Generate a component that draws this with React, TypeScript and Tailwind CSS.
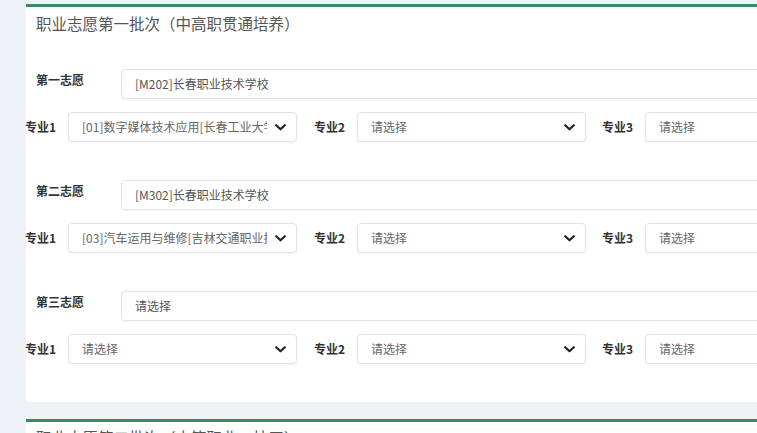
const font = { fontFamily: '"Noto Sans CJK SC", "Noto Sans", sans-serif' };

function Chevron() {
  return (
    <svg width="11" height="7" viewBox="0 0 11 7" className="shrink-0">
      <path d="M1.2 1.2 L5.5 5.3 L9.8 1.2" fill="none" stroke="#222" strokeWidth="2.2" strokeLinecap="round" strokeLinejoin="round" />
    </svg>
  );
}

function SelectBox({ value, width, chevron = true }: { value: string; width?: string; chevron?: boolean }) {
  return (
    <div
      className={`${width ?? 'flex-1'} h-[30px] flex items-center gap-2 pl-[13px] pr-[10px] bg-white border border-[#e1e3e8] rounded-[4px] shadow-[0_1px_2px_rgba(0,0,0,0.05)]`}
    >
      <span className="flex-1 overflow-hidden whitespace-nowrap text-[12px] leading-[16px] text-[#666]">{value}</span>
      {chevron && <Chevron />}
    </div>
  );
}

function MajorLabel({ text, width }: { text: string; width: string }) {
  return (
    <div className={`${width} shrink-0 pr-[12px] flex justify-end`}>
      <span className="whitespace-nowrap text-[12px] leading-[16px] font-bold text-[#333]">{text}</span>
    </div>
  );
}

function Choice({ label, school, majors }: { label: string; school: string; majors: string[] }) {
  return (
    <div className="flex flex-col gap-[13px]">
      <div className="flex items-start pl-[10px]">
        <span className="w-[85px] shrink-0 mt-[3px] whitespace-nowrap text-[12px] leading-[16px] font-bold text-[#333]">{label}</span>
        <div className="flex-1 h-[30px] flex items-center pl-[13px] border border-[#e1e3e8] rounded-[4px] shadow-[0_1px_2px_rgba(0,0,0,0.05)] text-[12px] leading-[16px] text-[#555]">
          {school}
        </div>
      </div>
      <div className="flex items-center -ml-[2px]">
        <MajorLabel text="专业1" width="w-[44px]" />
        <SelectBox value={majors[0]} width="w-[229px] shrink-0" />
        <MajorLabel text="专业2" width="w-[60px]" />
        <SelectBox value={majors[1]} width="w-[229px] shrink-0" />
        <MajorLabel text="专业3" width="w-[59px]" />
        <SelectBox value={majors[2]} />
      </div>
    </div>
  );
}

export default function App() {
  const rows = [
    { label: '第一志愿', school: '[M202]长春职业技术学校', majors: ['[01]数字媒体技术应用[长春工业大学]', '请选择', '请选择'] },
    { label: '第二志愿', school: '[M302]长春职业技术学校', majors: ['[03]汽车运用与维修[吉林交通职业技术学院]', '请选择', '请选择'] },
    { label: '第三志愿', school: '请选择', majors: ['请选择', '请选择', '请选择'] },
  ];

  return (
    <div className="min-h-screen w-full overflow-hidden bg-[#eef1f5] pl-[26px] pt-[4px]" style={font}>
      {/* 第一批次 */}
      <div className="w-[860px] bg-white border-t-[3px] border-[#3a8c60] pb-[38px]">
        <h2 className="pl-[10px] pt-[6px] text-[15.5px] leading-[20px] text-[#555]">职业志愿第一批次（中高职贯通培养）</h2>
        <div className="mt-[36px] flex flex-col gap-[38px]">
          {rows.map((r) => (
            <Choice key={r.label} {...r} />
          ))}
        </div>
      </div>

      {/* 第二批次 */}
      <div className="mt-[17px] w-[860px] h-[120px] bg-white border-t-[3px] border-[#3a8c60]">
        <h2 className="pl-[10px] pt-[5px] text-[15.5px] leading-[20px] text-[#555]">职业志愿第二批次（中等职业、技工）</h2>
      </div>
    </div>
  );
}
